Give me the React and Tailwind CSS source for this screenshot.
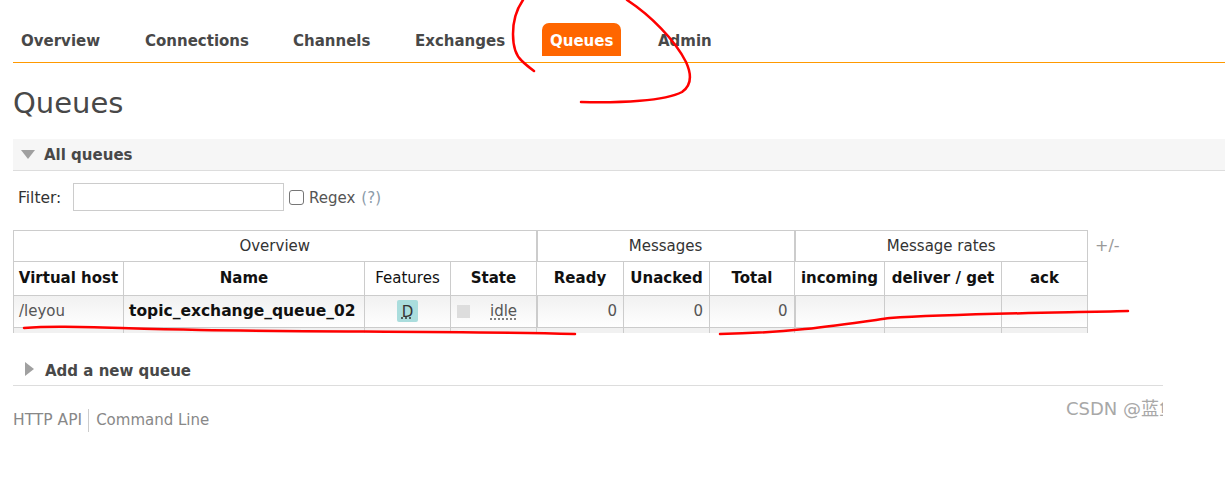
import React from 'react';

const navItems = ['Overview', 'Connections', 'Channels', 'Exchanges', 'Queues', 'Admin'];
const navWidths = ['w-[124px]', 'w-[148px]', 'w-[122px]', 'w-[135px]', 'w-[108px]', 'w-[92px]'];

const columns = [
  { label: 'Virtual host', width: 'w-[110px]', bold: true },
  { label: 'Name', width: 'w-[241px]', bold: true },
  { label: 'Features', width: 'w-[86px]' },
  { label: 'State', width: 'w-[86px]', bold: true },
  { label: 'Ready', width: 'w-[87px]', bold: true },
  { label: 'Unacked', width: 'w-[86px]', bold: true },
  { label: 'Total', width: 'w-[85px]', bold: true },
  { label: 'incoming', width: 'w-[90px]', bold: true },
  { label: 'deliver / get', width: 'w-[117px]', bold: true },
  { label: 'ack', width: 'w-[86px]', bold: true },
];

const Scribbles = () => (
  <svg className="absolute left-0 top-0 pointer-events-none" width="1225" height="477" fill="none" stroke="#ff0000" strokeWidth="2.5" strokeLinecap="round" strokeLinejoin="round">
    <path d="M523 0C516 10 513 20 513 34C513 46 515 55 522 61C526 65 530 68 534 71" />
    <path d="M627 0C650 15 675 40 686 62C692 75 692 85 682 92C665 101 620 103 581 102" />
    <path d="M24 328C60 325 100 328 200 330C330 332 460 331 575 334" />
    <path d="M720 334C790 333 840 325 890 318C950 314 1040 313 1128 311" />
  </svg>
);

export default function App() {
  return (
    <div className="relative w-[1225px] h-[477px] overflow-hidden bg-white pt-[23px] font-['DejaVu_Sans',sans-serif] text-[#484848]">
      <div className="ml-[13px] flex h-[40px] items-start border-b border-[#ff9900]">
        <div className="flex">
          {navItems.map((item, i) => (
            <div key={item} className={`${navWidths[i]} flex`}>
              <span
                className={
                  item === 'Queues'
                    ? 'flex h-[33px] items-center rounded-t-[7px] bg-[#ff6600] px-[8px] pt-[3px] text-[15px] font-bold text-white'
                    : 'flex h-[33px] items-center px-[8px] pt-[3px] text-[15px] font-bold text-[#484848]'
                }
              >
                {item}
              </span>
            </div>
          ))}
        </div>
      </div>

      <h1 className="ml-[13px] mt-[20px] text-[29px] leading-[40px] text-[#484848]">Queues</h1>

      <div className="mt-[16px] flex h-[32px] items-center border-b border-[#dddddd] bg-[#f6f6f6] ml-[13px] pl-[8px]">
        <span className="mr-[9px] h-0 w-0 border-x-[7px] border-t-[9px] border-x-transparent border-t-[#a0a0a0]" />
        <span className="pt-[2px] text-[15px] font-bold">All queues</span>
      </div>

      <div className="ml-[18px] mt-[12px] flex h-[28px] items-center text-[15px]">
        <span className="w-[55px] pt-[3px] text-[15.5px] text-[#333333]">Filter:</span>
        <input className="h-[28px] w-[211px] border border-[#cccccc] bg-white" readOnly />
        <span className="ml-[5px] h-[15px] w-[15px] rounded-[3px] border border-[#767676]" />
        <span className="ml-[5px] pt-[3px] text-[#555555]">Regex</span>
        <span className="ml-[6px] pt-[3px] text-[#8a9aa8]">(?)</span>
      </div>

      <div className="relative ml-[13px] mt-[19px] h-[103px] w-[1130px] overflow-hidden">
        <table className="w-[1075px] table-fixed border-collapse text-[15px]">
          <colgroup>
            {columns.map((col) => (
              <col key={col.label} className={col.width} />
            ))}
          </colgroup>
          <thead>
            <tr className="h-[31px]">
              <th colSpan={4} className="border border-r-2 border-[#cccccc] font-normal text-[#333333]">Overview</th>
              <th colSpan={3} className="border border-r-2 border-[#cccccc] font-normal text-[#333333]">Messages</th>
              <th colSpan={3} className="border border-[#cccccc] font-normal text-[#333333]">Message rates</th>
            </tr>
            <tr className="h-[34px]">
              {columns.map((col) => (
                <th
                  key={col.label}
                  className={`whitespace-nowrap border border-[#cccccc] p-0 text-[#111111] ${col.bold ? 'font-bold' : 'font-normal'}`}
                >
                  {col.label}
                </th>
              ))}
            </tr>
          </thead>
          <tbody>
            <tr className="h-[32px] bg-gradient-to-b from-[#f1f1f1] to-white">
              <td className="whitespace-nowrap border border-[#cccccc] pl-[5px] text-[#555555]">/leyou</td>
              <td className="whitespace-nowrap border border-[#cccccc] pl-[5px] text-[15.5px] font-bold text-[#111111]">topic_exchange_queue_02</td>
              <td className="border border-[#cccccc] text-center">
                <span className="inline-block h-[22px] w-[21px] rounded-[2px] bg-[#aadddd] text-center text-[15px] leading-[24px] text-[#333333] underline decoration-dotted">D</span>
              </td>
              <td className="border border-r-2 border-[#cccccc] pl-[6px]">
                <div className="flex items-center">
                  <span className="h-[13px] w-[13px] bg-[#dddddd]" />
                  <span className="ml-[20px] text-[#555555] underline decoration-dotted underline-offset-2">idle</span>
                </div>
              </td>
              <td className="border border-[#cccccc] pr-[6px] text-right text-[#555555]">0</td>
              <td className="border border-[#cccccc] pr-[6px] text-right text-[#555555]">0</td>
              <td className="border border-r-2 border-[#cccccc] pr-[6px] text-right text-[#555555]">0</td>
              <td className="border border-[#cccccc]" />
              <td className="border border-[#cccccc]" />
              <td className="border border-[#cccccc]" />
            </tr>
            <tr className="h-[20px] bg-[#f1f1f1]">
              {columns.map((col) => (
                <td key={col.label} className="border border-[#cccccc]" />
              ))}
            </tr>
          </tbody>
        </table>
        <span className="absolute left-[1082px] top-[4px] text-[16px] text-[#999999]">+/-</span>
      </div>

      <div className="ml-[13px] mt-[20px] w-[1150px] overflow-hidden">
        <div className="flex h-[33px] items-center border-b border-[#dddddd] pl-[12px] pt-[4px]">
          <span className="mr-[11px] -mt-[4px] h-0 w-0 border-y-[7px] border-l-[9px] border-y-transparent border-l-[#a0a0a0]" />
          <span className="text-[15px] font-bold">Add a new queue</span>
        </div>
        <div className="mt-[23px] flex items-start justify-between text-[15px] text-[#888888]">
          <div className="flex items-center">
            <span className="border-r border-[#cccccc] pr-[6px] text-[15.5px]">HTTP API</span>
            <span className="pl-[7px] text-[15px]">Command Line</span>
          </div>
          <span className="-mr-[20px] -mt-[14px] w-[117px] whitespace-nowrap text-[18px] text-[#a8a8a8] font-['DejaVu_Sans','Noto_Sans_CJK_SC',sans-serif]">CSDN @蓝鱼</span>
        </div>
      </div>

      <Scribbles />
    </div>
  );
}
